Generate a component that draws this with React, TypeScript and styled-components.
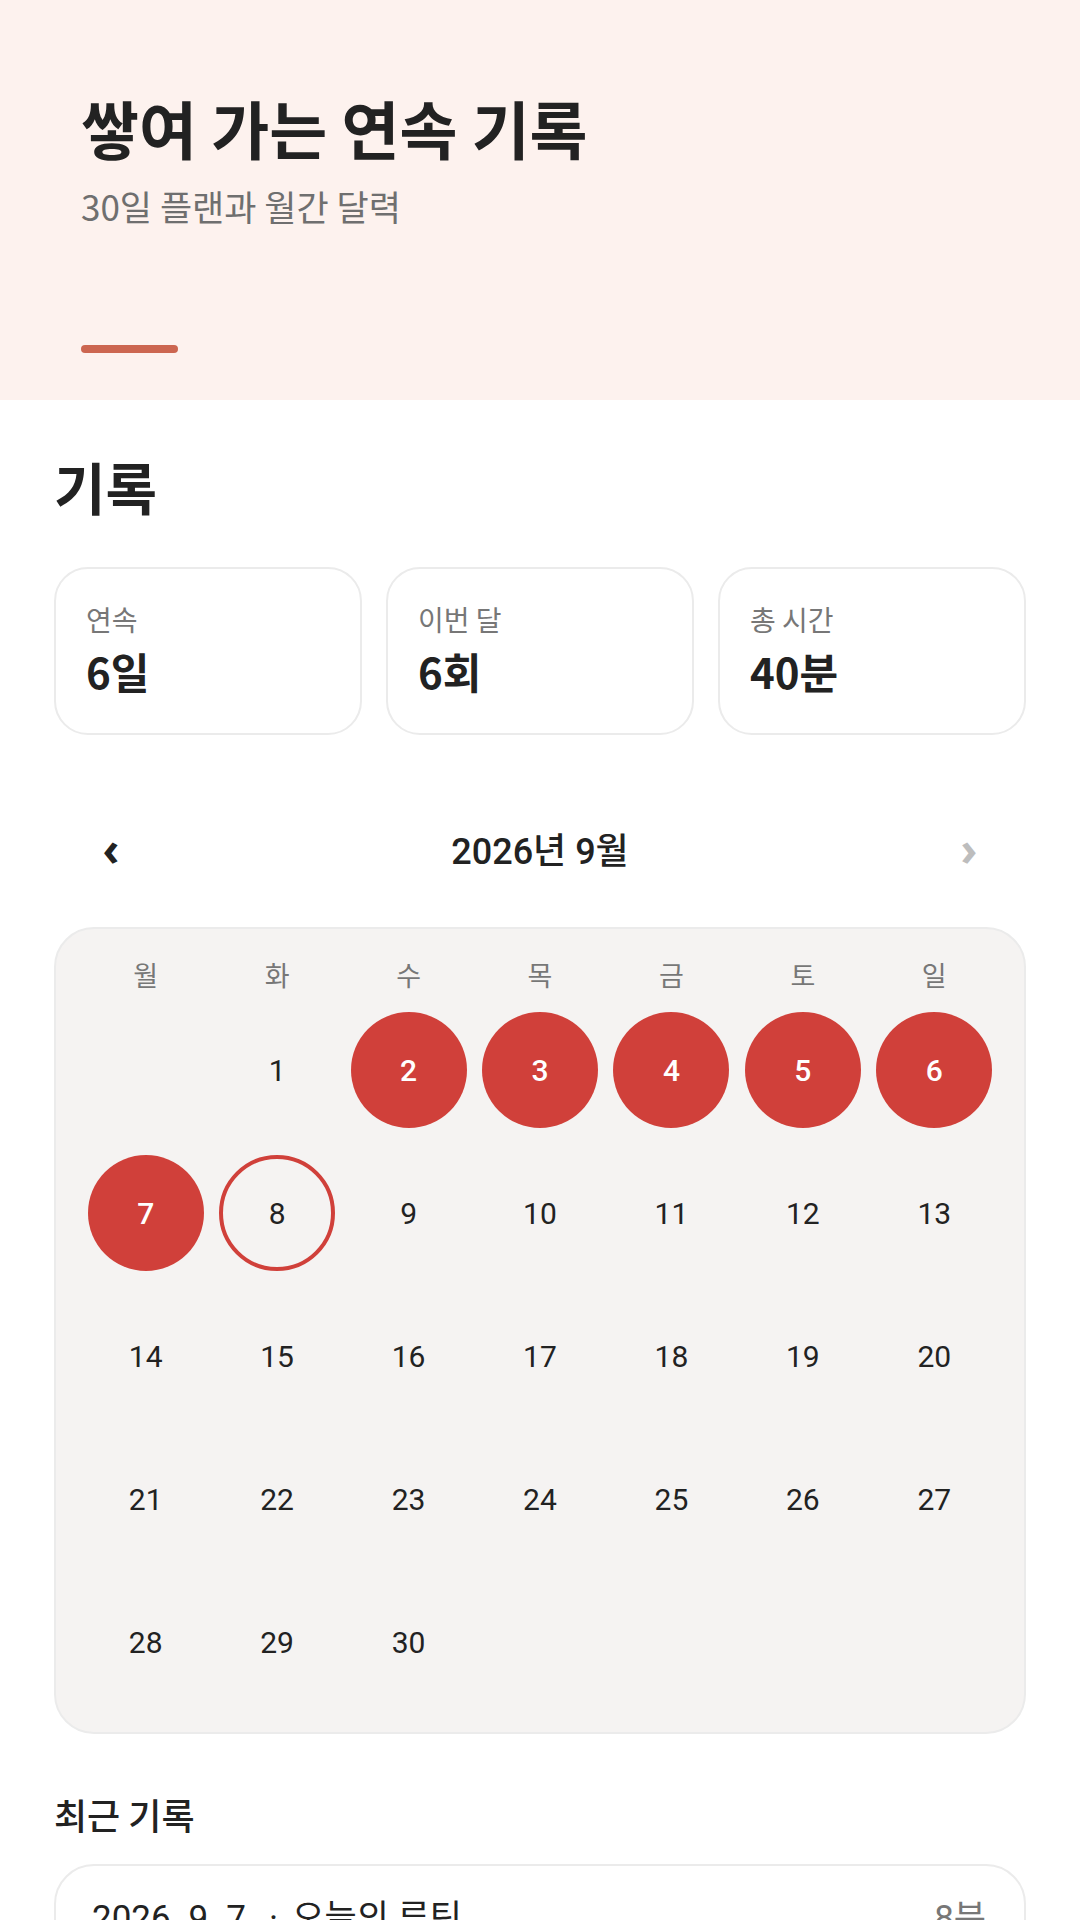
import React from "react";
import styled, { createGlobalStyle } from "styled-components";

const GlobalStyle = createGlobalStyle`
  html, body {
    margin: 0;
    padding: 0;
    background: #ffffff;
  }
  body {
    font-family: "Noto Sans CJK KR", "Noto Sans", sans-serif;
    color: #222222;
  }
  * { box-sizing: border-box; }
`;

const Page = styled.div`
  width: 1080px;
  min-height: 1920px;
  background: #ffffff;
  overflow: hidden;
`;

const Hero = styled.header`
  height: 400px;
  background: #fdf2ee;
  padding: 89px 81px 0;
  display: flex;
  flex-direction: column;
`;

const HeroTitle = styled.h1`
  margin: 0;
  font-family: "Noto Sans CJK KR", sans-serif;
  font-size: 63px;
  line-height: 76px;
  font-weight: 700;
  color: #222222;
`;

const HeroSub = styled.p`
  margin: 16px 0 0;
  font-family: "Noto Sans CJK KR", sans-serif;
  font-size: 35px;
  line-height: 50px;
  font-weight: 400;
  color: #6f6f6f;
`;

const AccentBar = styled.div`
  margin-top: 114px;
  width: 97px;
  height: 8px;
  border-radius: 4px;
  background: #cc6650;
`;

const Main = styled.main`
  padding: 52px 54px 0;
  display: flex;
  flex-direction: column;
`;

const SectionTitle = styled.h2`
  margin: 0;
  font-family: "Noto Sans CJK KR", sans-serif;
  font-size: 56px;
  line-height: 68px;
  font-weight: 700;
  color: #222222;
`;

const StatGrid = styled.div`
  margin-top: 47px;
  display: grid;
  grid-template-columns: repeat(3, 1fr);
  gap: 24px;
`;

const StatCard = styled.div`
  height: 168px;
  border: 2px solid #ebebeb;
  border-radius: 34px;
  background: #ffffff;
  padding: 32px 30px 0;
  display: flex;
  flex-direction: column;
`;

const StatLabel = styled.span`
  font-family: "Noto Sans CJK KR", sans-serif;
  font-size: 28px;
  line-height: 36px;
  color: #777777;
`;

const StatValue = styled.span`
  margin-top: 8px;
  font-family: "Noto Sans CJK KR", sans-serif;
  font-size: 42px;
  line-height: 52px;
  font-weight: 700;
  color: #222222;
`;

const MonthNav = styled.div`
  margin-top: 73px;
  height: 80px;
  display: flex;
  align-items: center;
  justify-content: space-between;
`;

const NavButton = styled.button<{ $muted?: boolean }>`
  width: 114px;
  height: 80px;
  border: none;
  background: transparent;
  padding: 0;
  display: flex;
  align-items: center;
  justify-content: center;
  font-family: "Noto Sans", sans-serif;
  font-size: 46px;
  line-height: 1;
  font-weight: 700;
  color: ${(p) => (p.$muted ? "#bdbdbd" : "#222222")};
`;

const MonthLabel = styled.span`
  font-family: Roboto, "Noto Sans CJK KR", sans-serif;
  font-size: 36px;
  font-weight: 500;
  color: #222222;
`;

const CalendarCard = styled.section`
  margin-top: 39px;
  border: 2px solid #ebebeb;
  border-radius: 40px;
  background: #f5f3f2;
  padding: 28px 24px 32px;
`;

const WeekRow = styled.div`
  display: grid;
  grid-template-columns: repeat(7, 1fr);
  height: 36px;
  margin-bottom: 19px;
`;

const WeekDay = styled.span`
  text-align: center;
  font-family: "Noto Sans CJK KR", sans-serif;
  font-size: 27px;
  line-height: 36px;
  color: #777777;
`;

const DayGrid = styled.div`
  display: grid;
  grid-template-columns: repeat(7, 1fr);
  grid-auto-rows: 116px;
  row-gap: 27px;
`;

const DayCell = styled.div`
  display: flex;
  align-items: center;
  justify-content: center;
`;

type DayState = "done" | "today" | "plain";

const DayBubble = styled.div<{ $state: DayState }>`
  width: 116px;
  height: 116px;
  border-radius: 50%;
  display: flex;
  align-items: center;
  justify-content: center;
  font-family: Roboto, sans-serif;
  font-size: 30px;
  font-weight: ${(p) => (p.$state === "done" ? 500 : 400)};
  background: ${(p) => (p.$state === "done" ? "#d0403a" : "transparent")};
  color: ${(p) => (p.$state === "done" ? "#ffffff" : "#222222")};
  border: ${(p) => (p.$state === "today" ? "4px solid #d0403a" : "none")};
`;

const RecentTitle = styled.h3`
  margin: 56px 0 0;
  font-family: "Noto Sans CJK KR", sans-serif;
  font-size: 36px;
  line-height: 48px;
  font-weight: 500;
  color: #222222;
`;

const RecentCard = styled.div`
  margin-top: 26px;
  border: 2px solid #ebebeb;
  border-radius: 40px;
  background: #ffffff;
  padding: 30px 38px 30px 36px;
  display: flex;
  align-items: center;
  justify-content: space-between;
`;

const RecentText = styled.span<{ $muted?: boolean }>`
  font-family: Roboto, "Noto Sans CJK KR", sans-serif;
  font-size: 35px;
  line-height: 46px;
  color: ${(p) => (p.$muted ? "#777777" : "#222222")};
`;

const Dot = styled.span`
  margin: 0 14px;
`;

const stats = [
  { label: "연속", value: "6일" },
  { label: "이번 달", value: "6회" },
  { label: "총 시간", value: "40분" },
];

const weekdays = ["월", "화", "수", "목", "금", "토", "일"];

const doneDays = new Set([2, 3, 4, 5, 6, 7]);
const today = 8;

export default function App() {
  const cells: (number | null)[] = [null];
  for (let d = 1; d <= 30; d++) cells.push(d);

  return (
    <Page>
      <GlobalStyle />
      <Hero>
        <HeroTitle>쌓여 가는 연속 기록</HeroTitle>
        <HeroSub>30일 플랜과 월간 달력</HeroSub>
        <AccentBar />
      </Hero>
      <Main>
        <SectionTitle>기록</SectionTitle>
        <StatGrid>
          {stats.map((s) => (
            <StatCard key={s.label}>
              <StatLabel>{s.label}</StatLabel>
              <StatValue>{s.value}</StatValue>
            </StatCard>
          ))}
        </StatGrid>

        <MonthNav>
          <NavButton aria-label="이전 달">‹</NavButton>
          <MonthLabel>2026년 9월</MonthLabel>
          <NavButton $muted aria-label="다음 달">›</NavButton>
        </MonthNav>

        <CalendarCard>
          <WeekRow>
            {weekdays.map((w) => (
              <WeekDay key={w}>{w}</WeekDay>
            ))}
          </WeekRow>
          <DayGrid>
            {cells.map((d, i) => (
              <DayCell key={i}>
                {d !== null && (
                  <DayBubble
                    $state={
                      doneDays.has(d) ? "done" : d === today ? "today" : "plain"
                    }
                  >
                    {d}
                  </DayBubble>
                )}
              </DayCell>
            ))}
          </DayGrid>
        </CalendarCard>

        <RecentTitle>최근 기록</RecentTitle>
        <RecentCard>
          <RecentText>
            2026. 9. 7.<Dot>·</Dot>오늘의 루틴
          </RecentText>
          <RecentText $muted>8분</RecentText>
        </RecentCard>
      </Main>
    </Page>
  );
}
